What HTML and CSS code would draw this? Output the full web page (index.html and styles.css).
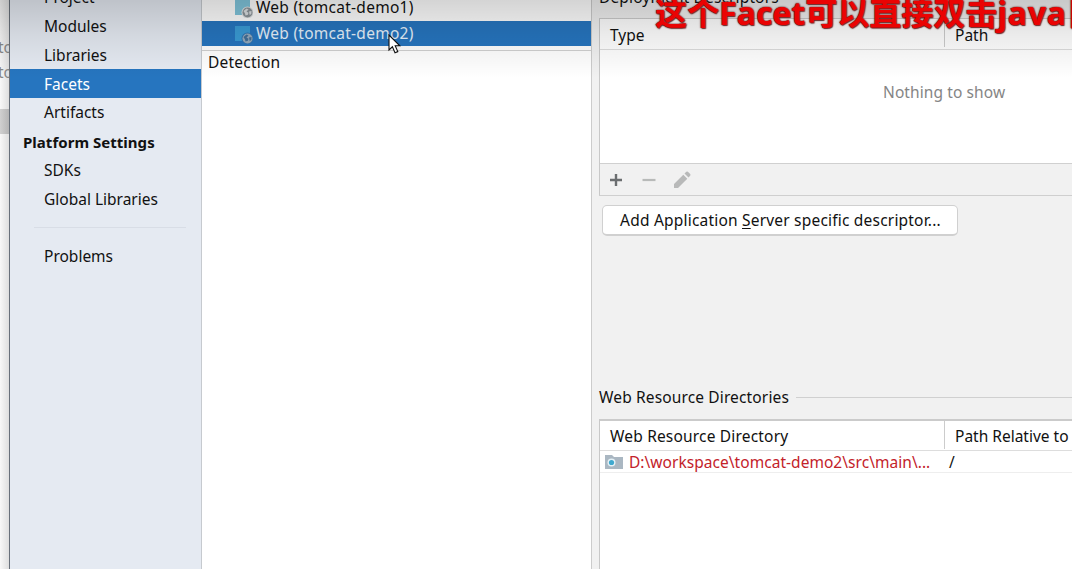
FILE: index.html
```html
<!DOCTYPE html>
<html lang="en">
<head>
<meta charset="utf-8">
<title>Project Structure</title>
<link rel="stylesheet" href="styles.css">
</head>
<body>
<div class="window">
  <div class="backdrop"><span>to</span><span>to</span><i></i></div>
  <nav class="sidebar">
    <a class="project">Project</a>
    <a>Modules</a>
    <a>Libraries</a>
    <a class="selected">Facets</a>
    <a>Artifacts</a>
    <h2>Platform Settings</h2>
    <a>SDKs</a>
    <a>Global Libraries</a>
    <hr>
    <a>Problems</a>
  </nav>
  <section class="facets">
    <div class="facet"><svg class="web-icon" viewBox="0 0 18 18"><path class="tile" d="M0 0h15v15H0z"/><circle class="halo" cx="12.5" cy="12.5" r="6"/><circle class="globe" cx="12.5" cy="12.5" r="5"/><path class="land" d="M8.5 11l3-2.6 2 1-2 2.2 2 1.2-.6 2-2.4.6-.5-2zM14 11.500l2.500-.5-.2 3-1.600 1z"/></svg><span>Web (tomcat-demo1)</span></div>
    <div class="facet active"><svg class="web-icon" viewBox="0 0 18 18"><path class="tile" d="M0 0h15v15H0z"/><circle class="halo" cx="12.5" cy="12.5" r="6"/><circle class="globe" cx="12.5" cy="12.5" r="5"/><path class="land" d="M8.5 11l3-2.6 2 1-2 2.2 2 1.2-.6 2-2.4.6-.5-2zM14 11.500l2.500-.5-.2 3-1.600 1z"/></svg><span>Web (tomcat-demo2)</span></div>
    <div class="detection">Detection</div>
  </section>
  <main class="details">
    <h3 class="deployment"><span>Deployment Descriptors</span></h3>
    <div class="table descriptors">
      <div class="head"><span>Type</span><span>Path</span></div>
      <div class="empty">Nothing to show</div>
      <div class="tools">
        <svg viewBox="0 0 16 16"><path d="M8 2v12M2 8h12" stroke="#6b6e70" stroke-width="2.4"/></svg>
        <svg viewBox="0 0 16 16"><path d="M1.500 8h13" stroke="#b8bab9" stroke-width="2.200"/></svg>
        <svg class="pencil" viewBox="0 0 18 18"><path d="M1 17v-4L10.300 3.700l4 4L5 17zM11.500 2.500L13.300.8q.8-.6 1.600 0l2.300 2.300q.6.8 0 1.600l-1.700 1.800z" fill="#b8b9b9"/></svg>
      </div>
    </div>
    <button>Add Application <u>S</u>erver specific descriptor...</button>
    <h3 class="resources"><span>Web Resource Directories</span></h3>
    <div class="table directories">
      <div class="head"><span class="wrd">Web Resource Directory</span><span class="prt">Path Relative to</span></div>
      <div class="row"><svg viewBox="0 0 18 14"><path d="M0 0h7l2 2h9v12H0z" fill="#aab7c2"/><circle cx="6.500" cy="7.500" r="4" fill="#e4f1f7"/><circle cx="6.500" cy="7.500" r="2.600" fill="#3fa9cf"/></svg><span class="path">D:\workspace\tomcat-demo2\src\main\...</span><span>/</span></div>
    </div>
  </main>
  <div class="shade"></div>
  <div class="subtitle">这个Facet可以直接双击<span>java目</span></div>
  <svg class="cursor" viewBox="0 0 14 20"><path d="M1 1v15l3.400-3.200 2.600 6 2.800-1.200-2.600-5.800h4.600z" fill="#fff" stroke="#111" stroke-width="1.100"/></svg>
</div>
</body>
</html>
```
FILE: styles.css
```css
* { box-sizing: border-box; }
body { margin: 0; overflow: hidden; background: #f1f1f1; color: #111; font: 15.5px/20px "Noto Sans", "Open Sans", sans-serif; }
h2, h3 { margin: 0; font-size: inherit; }
.window { position: relative; display: flex; width: 1072px; height: 569px; overflow: hidden; }

.backdrop { flex: none; width: 9px; padding-top: 37px; overflow: hidden; background: linear-gradient(90deg, #f8f8f8, #dedede); color: #888; }
.backdrop span { display: block; height: 25px; margin-left: -2px; }
.backdrop i { display: block; height: 25px; margin-top: 22px; background: linear-gradient(90deg, #d0d0d0, #b5b5b5); }

.sidebar { flex: none; width: 193px; display: flex; flex-direction: column; border-left: 1px solid #68707a; border-right: 1px solid #c6cacf; background: #e5eaf2; }
.sidebar a { flex: none; height: 28.8px; padding-left: 34px; line-height: 28px; }
.sidebar .project { margin-top: -17px; }
.sidebar .selected { height: 29px; margin-top: -.4px; line-height: 30px; background: #2675bf; color: #fff; }
.sidebar h2 { height: 29px; padding-left: 13px; line-height: 30px; font-size: 15px; letter-spacing: .03px; }
.sidebar hr { width: 152px; height: 1px; margin: 14px 0 14px 24px; border: 0; background: #d8dde6; }

.facets { flex: none; width: 390px; border-right: 1px solid #ccc; background: #fff; }
.facet { display: flex; height: 25px; padding-left: 33px; line-height: 24px; letter-spacing: .26px; }
.facet:first-child { height: 21px; line-height: 15px; }
.facet.active { background: #2675bf; color: #e7f2fc; }
.web-icon { width: 18px; height: 18px; margin: 5px 3px 0 0; }
.facet:first-child .web-icon { margin-top: 0; }
.tile { fill: #80c5dc; }
.halo { fill: #e3e6e7; }
.globe { fill: #8c9499; }
.land { fill: #dce0e2; }
.active .tile { fill: #3a9bd5; }
.active .halo { fill: #2f74b2; }
.active .globe { fill: #94aabd; }
.active .land { fill: #416f98; }
.detection { margin: 4px 0 0; padding: 1px 6px; border-top: 1px solid #d0d0d0; letter-spacing: .22px; }

.details { flex: 1; min-width: 0; padding-left: 7px; background: #f1f1f1; }
.details h3 { display: flex; align-items: center; gap: 7px; font-weight: 400; letter-spacing: .14px; white-space: nowrap; }
.details h3::after { content: ""; height: 1px; flex: 1; background: #d0d0d0; }
.deployment { height: 20px; margin-top: -13px; }
.table { border-left: 1px solid #c8c8c8; border-top: 1px solid #ccc; background: #fff; }
.descriptors { height: 178px; margin-top: 11px; margin-bottom: 9px; border-bottom: 2px solid #cfcfcf; }
.head { display: grid; grid-template-columns: 344px 1fr; height: 31px; border-bottom: 1px solid #ddd; white-space: nowrap; background: #fff; }
.head span { padding-left: 10px; line-height: 33px; }
.head span + span { height: 28px; border-left: 1px solid #ccc; }
.directories .head { height: 30px; }
.head .wrd { line-height: 31px; letter-spacing: .18px; }
.head .prt { line-height: 31px; }
.empty { height: 113px; padding: 32px 0 0 283px; color: #858585; letter-spacing: .1px; }
.tools { display: flex; align-items: center; height: 32px; padding-left: 8px; gap: 17px; border-top: 1px solid #d0d0d0; background: #f1f1f1; }
.tools svg { width: 16px; height: 16px; }
.tools .pencil { width: 18px; height: 18px; margin-left: -1px; }
button { display: block; width: 356px; height: 31px; margin-left: 3px; padding: 0 0 0 1px; border: 2px solid #d0d0d0; border-width: 1.5px 1.5px 2px; border-radius: 5px; background: #fff; color: #111; font: inherit; letter-spacing: .2px; white-space: nowrap; }
button u { text-underline-offset: 2px; }
.resources { height: 20px; margin-top: 151px; }
.directories { height: 150px; margin-top: 12px; border-top: 2px solid #cbcbcb; }
.row { display: grid; grid-template-columns: 24px 320px 1fr; height: 22px; padding-left: 5px; border-bottom: 1px solid #eee; line-height: 23px; white-space: nowrap; }
.row svg { width: 18px; height: 14px; margin-top: 4px; }
.path { color: #c3222a; letter-spacing: .04px; }

.shade { position: absolute; inset: 0 0 auto; height: 78px; background: linear-gradient(rgba(0,0,0,.17), rgba(0,0,0,.08) 45%, transparent); }
.subtitle { position: absolute; left: 655px; top: -9px; color: #ea0303; font: 700 32px/44px "Noto Sans", "Noto Sans CJK SC", sans-serif; font-family: "Open Sans", "Noto Sans CJK SC", sans-serif; white-space: nowrap; text-shadow: 0 0 1px #611, 0 0 2px #622, 1px 1px 1px #733; }
.subtitle span { letter-spacing: .7px; }
.cursor { position: absolute; left: 388px; top: 34px; width: 14px; height: 20px; }
```
